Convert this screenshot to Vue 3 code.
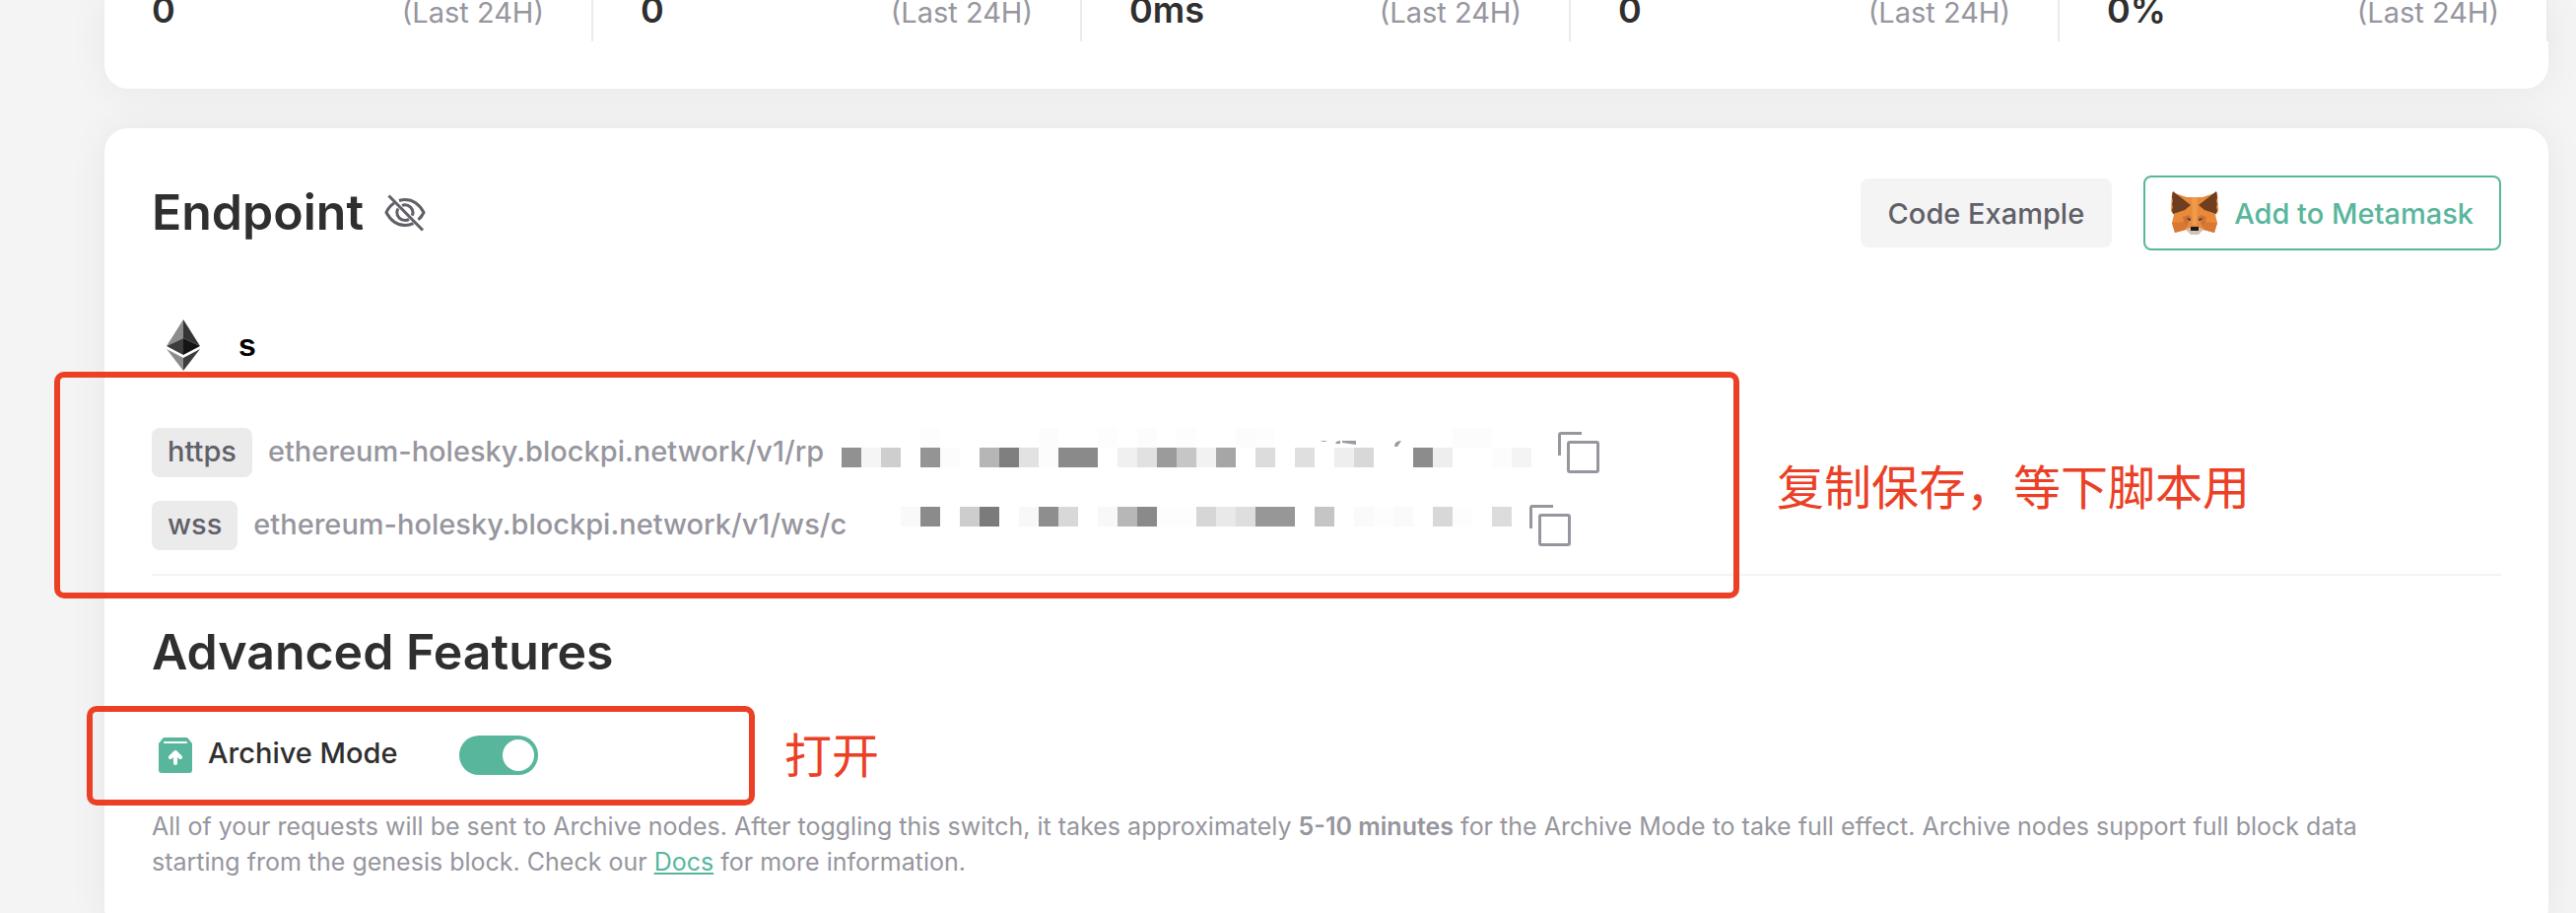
<script setup>
import { ref } from 'vue';

const stats = [
  { value: '0', period: '(Last 24H)' },
  { value: '0', period: '(Last 24H)' },
  { value: '0ms', period: '(Last 24H)' },
  { value: '0', period: '(Last 24H)' },
  { value: '0%', period: '(Last 24H)' },
];

// Grey level of each masked block, 255 is blank
const endpoints = [
  {
    scheme: 'https',
    url: 'ethereum-holesky.blockpi.network/v1/rp',
    faint: [255, 255, 255, 255, 253, 255, 255, 255, 255, 255, 252, 255, 255, 253, 255, 252, 255, 253, 255, 255, 252, 253, 255, 255, 255, 255, 255, 255, 255, 255, 255, 252, 252, 255, 255],
    mask: [145, 245, 206, 255, 148, 252, 255, 182, 127, 226, 252, 138, 138, 255, 240, 225, 155, 198, 242, 166, 255, 220, 255, 223, 255, 238, 216, 255, 255, 140, 238, 255, 255, 252, 244],
  },
  {
    scheme: 'wss',
    url: 'ethereum-holesky.blockpi.network/v1/ws/c',
    faint: [],
    mask: [249, 139, 255, 205, 123, 255, 248, 142, 216, 255, 248, 183, 138, 253, 253, 214, 233, 222, 151, 151, 255, 197, 255, 250, 253, 250, 255, 216, 253, 255, 220],
  },
];

const archiveMode = ref(true);

function grey(level) {
  return { background: `rgb(${level}, ${level}, ${level})` };
}

function copyUrl(url) {
  navigator.clipboard?.writeText(url);
}
</script>

<template>
  <main class="page">
    <section class="card stats">
      <div v-for="(stat, i) in stats" :key="i" class="stat">
        <strong class="stat-value">{{ stat.value }}</strong>
        <span class="stat-period">{{ stat.period }}</span>
      </div>
    </section>

    <section class="card detail">
      <header class="head">
        <h2>Endpoint</h2>
        <button class="icon-btn" type="button" aria-label="Show endpoint">
          <svg class="eye" viewBox="0 0 42 38" fill="none" stroke="#5f6068" stroke-width="3">
            <path d="M15 6.5C17 5.800 19 5.500 21 5.500c8.500 0 15 5.500 19 13-1.300 2.800-3 5.200-5.500 7.300" />
            <path d="M10 9C6 11.500 3.500 15 2 18.500c4 7.500 10.500 13 19 13 3 0 6-.7 8.500-1.800" />
            <path d="M18 11.500c1-.5 2-.7 3-.7 4.300 0 8 3.500 8 7.700 0 1.200-.3 2.200-.8 3.200" />
            <path d="M14 14.500c-.8 1.200-1.200 2.600-1.200 4 0 4.500 3.700 8 8.200 8 1.500 0 2.800-.4 4-1.100" />
            <path d="M4.500 1.500 39 36.500" />
          </svg>
        </button>
        <div class="actions">
          <button class="btn plain" type="button">Code Example</button>
          <button class="btn outline" type="button">
            <svg class="fox" viewBox="0 0 48 44">
              <path fill="#e88a3a" d="M1 1 16 6h16L47 1l1 19-3 4 2 8-3 10-11-3-5 4h-8l-5-4-11 3-3-10 2-8-3-4z" />
              <path fill="#d97833" d="m1 32 12-1 2 8-11 3zM47 32l-12-1-2 8 11 3z" />
              <path fill="#d07230" d="m12 26 6-2 3 3-3 4-3 7-2-7zM36 26l-6-2-3 3 3 4 3 7 2-7z" />
              <path fill="#f09a4b" d="M21 6h6l-1 28h-4z" />
              <path fill="#6d3f20" d="M2 0 20 14l-6 5-12 4-1-4 1-3-1-3 1-3-1-4zM46 0 28 14l6 5 12 4 1-4-1-3 1-3-1-3 1-4z" />
              <path fill="#2c4663" d="m16 27 4 1v2l-3-1zM32 27l-4 1v2l3-1z" />
              <path fill="#d3c1b5" d="m15 38 5-1h8l5 1-5 6h-8z" />
              <path fill="#1b1b1b" d="M20 36h8v4h-8z" />
            </svg>
            Add to Metamask
          </button>
        </div>
      </header>

      <div class="network">
        <svg class="eth" viewBox="0 0 34 52">
          <path fill="#8c8c8c" d="M17 0 0 27l17-8z" />
          <path fill="#353535" d="m17 0 17 27-17-8z" />
          <path fill="#3c3c3b" d="m17 19-17 8 17 9z" />
          <path fill="#141414" d="m17 19 17 8-17 9z" />
          <path fill="#8c8c8c" d="m0 30 17 9v13z" />
          <path fill="#3c3c3b" d="m34 30-17 9v13z" />
        </svg>
        <span>s</span>
      </div>

      <div class="endpoints">
        <div v-for="item in endpoints" :key="item.scheme" class="endpoint" :class="item.scheme">
          <span class="scheme">{{ item.scheme }}</span>
          <span class="url">{{ item.url }}</span>
          <span class="mask">
            <span v-if="item.faint.length" class="mask-row">
              <i v-for="(level, i) in item.faint" :key="i" :style="grey(level)"></i>
            </span>
            <span class="mask-row">
              <i v-for="(level, i) in item.mask" :key="i" :style="grey(level)"></i>
            </span>
            <svg v-if="item.scheme === 'https'" class="remnant" viewBox="0 0 90 8" fill="#9a9aa2">
              <path d="M2 2q3-2 7 0zM17 4q1-3 5-3v3zM24 1h14v4l-14-2zM77 7q0-6 7-6l-4 6z" />
            </svg>
          </span>
          <button class="icon-btn" type="button" :aria-label="'Copy ' + item.scheme" @click="copyUrl(item.url)">
            <svg class="copy" viewBox="0 0 42 42" fill="none" stroke="#96969e" stroke-width="3">
              <path d="M1.500 24V3q0-1.500 1.500-1.500h21" />
              <rect x="10.500" y="10.500" width="30" height="30" rx="1.500" />
            </svg>
          </button>
        </div>
        <div class="frame frame-endpoints"></div>
        <p class="note note-endpoints">复制保存，等下脚本用</p>
      </div>

      <h2>Advanced Features</h2>

      <div class="archive">
        <svg class="archive-icon" viewBox="0 0 34 36">
          <path fill="#58b69c" d="M5 0h24l5 6v27q0 3-3 3H3q-3 0-3-3V6z" />
          <path stroke="#fff" stroke-width="2" stroke-linecap="round" d="M6 5h22" />
          <path fill="none" stroke="#fff" stroke-width="4" stroke-linecap="round" stroke-linejoin="round" d="M17 26V15M12 20l5-5 5 5" />
        </svg>
        <label for="archive-mode">Archive Mode</label>
        <input id="archive-mode" v-model="archiveMode" class="toggle" type="checkbox" role="switch" />
        <div class="frame frame-archive"></div>
        <p class="note note-archive">打开</p>
      </div>

      <p class="hint">
        All of your requests will be sent to Archive nodes. After toggling this switch, it takes approximately
        <b>5-10 minutes</b> for the Archive Mode to take full effect. Archive nodes support full block data
        starting from the genesis block. Check our <a href="#">Docs</a> for more information.
      </p>
    </section>
  </main>
</template>

<style>
body {
  background: #f4f4f4;
}
</style>

<style scoped>
* {
  margin: 0;
  padding: 0;
  box-sizing: border-box;
}

.page {
  display: flex;
  flex-direction: column;
  gap: 40px;
  height: 100vh;
  padding: 0 28px 0 106px;
  overflow: hidden;
  font-family: Inter, 'Noto Sans CJK SC', sans-serif;
  font-size: 29px;
  color: #2f2f2f;
}

.card {
  flex: none;
  background: #fff;
  border-radius: 24px;
  box-shadow: 0 0 40px rgba(0, 0, 0, 0.06);
}

/* Stats */
.stats {
  display: grid;
  grid-template-columns: repeat(5, 1fr);
  border-radius: 0 0 24px 24px;
  padding-bottom: 48px;
}

.stat {
  display: flex;
  justify-content: space-between;
  align-items: baseline;
  height: 42px;
  padding: 0 48px;
  border-right: 2px solid #ebebeb;
  line-height: 20px;
}

.stat-value {
  font-size: 36px;
  font-weight: 600;
}

.stat-period {
  font-size: 29px;
  color: #96969e;
}

/* Endpoint card */
.detail {
  padding: 48px 48px 52px;
}

h2 {
  font-size: 50px;
  font-weight: 600;
  line-height: 70px;
}

button {
  font: inherit;
  cursor: pointer;
}

.icon-btn {
  display: flex;
  border: 0;
  background: none;
}

.head {
  display: flex;
  align-items: center;
  height: 76px;
  gap: 20px;
}

.head h2 {
  height: 72px;
}

.eye {
  width: 44px;
  height: 38px;
}

.actions {
  display: flex;
  align-items: center;
  gap: 32px;
  margin-left: auto;
}

.btn {
  display: flex;
  align-items: center;
  gap: 16px;
  border-radius: 8px;
  padding: 0 28px;
  font-weight: 500;
}

.plain {
  height: 70px;
  border: 0;
  background: #f4f4f4;
  color: #5f6068;
}

.outline {
  height: 76px;
  padding: 0 26px;
  border: 2px solid #58b69c;
  background: #fff;
  color: #58b69c;
}

.fox {
  width: 48px;
  height: 44px;
}

.network {
  display: flex;
  align-items: center;
  gap: 39px;
  margin-top: 70px;
  padding-left: 15px;
  font-family: 'Liberation Sans', sans-serif;
  font-size: 32px;
  font-weight: 700;
  color: #000;
}

.eth {
  width: 34px;
  height: 52px;
}

.endpoints {
  position: relative;
  display: flex;
  flex-direction: column;
  gap: 24px;
  margin-top: 58px;
  padding-bottom: 24px;
  border-bottom: 2px solid #f4f4f4;
}

.endpoint {
  display: flex;
  align-items: center;
  height: 50px;
  color: #96969e;
  font-weight: 500;
  line-height: 48px;
}

.scheme {
  height: 50px;
  margin-right: 16px;
  padding: 0 16px;
  border-radius: 8px;
  background: #ebebeb;
  color: #5f6068;
}

.url {
  height: 50px;
  white-space: nowrap;
}

.mask {
  position: relative;
  align-self: flex-start;
  margin: 0 27px 0 18px;
}

.wss .mask {
  margin: 6px 18px 0 55px;
}

.mask-row {
  display: flex;
}

.mask-row i {
  width: 20px;
  height: 20px;
}

.remnant {
  position: absolute;
  left: 484px;
  top: 12px;
  width: 90px;
  height: 8px;
}

.copy {
  width: 42px;
  height: 42px;
}

/* Callouts lying over the page */
.frame {
  position: absolute;
  border: 6px solid #eb4026;
  border-radius: 10px;
  pointer-events: none;
}

.frame-endpoints {
  left: -99px;
  top: -57px;
  width: 1710px;
  height: 230px;
}

.note {
  position: absolute;
  color: #eb4026;
  font-family: 'Noto Sans CJK SC', sans-serif;
  font-size: 48px;
  font-weight: 400;
  line-height: 72px;
  white-space: nowrap;
}

.note-endpoints {
  left: 1649px;
  top: 21px;
}

.endpoints + h2 {
  margin-top: 42px;
}

.archive {
  position: relative;
  display: flex;
  align-items: center;
  height: 40px;
  margin-top: 50px;
  padding-left: 7px;
  font-weight: 500;
  line-height: 36px;
}

.archive label {
  height: 40px;
}

.archive-icon {
  width: 34px;
  height: 36px;
  margin-right: 16px;
}

.toggle {
  appearance: none;
  width: 80px;
  height: 40px;
  margin-left: 62px;
  padding: 4px;
  border-radius: 20px;
  background: #c4c4c8;
  cursor: pointer;
}

.toggle::before {
  content: '';
  display: block;
  width: 32px;
  height: 32px;
  border-radius: 50%;
  background: #fff;
}

.toggle:checked {
  background: #58b69c;
}

.toggle:checked::before {
  margin-left: auto;
}

.frame-archive {
  left: -66px;
  top: -30px;
  width: 678px;
  height: 101px;
}

.note-archive {
  left: 642px;
  top: -19px;
}

.hint {
  margin-top: 34px;
  padding-right: 100px;
  font-size: 25px;
  line-height: 36px;
  color: #96969e;
}

.hint b {
  font-weight: 600;
}

.hint a {
  color: #58b69c;
}
</style>
